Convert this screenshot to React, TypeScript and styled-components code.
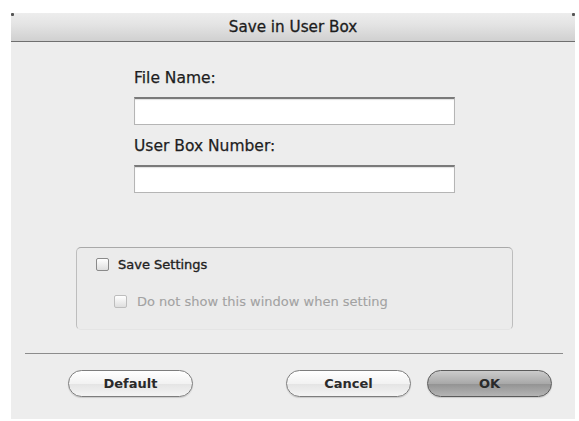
import React from "react";
import styled, { createGlobalStyle } from "styled-components";

const Global = createGlobalStyle`
  html, body { margin: 0; padding: 0; background: #ffffff; }
  body { font-family: "DejaVu Sans", "Liberation Sans", sans-serif; }
`;

const Window = styled.div`
  margin: 13px 0 0 11px;
  width: 564px;
  height: 406px;
  background: #ededed;
  display: flex;
  flex-direction: column;
  position: relative;
`;

const TitleBar = styled.div`
  height: 28px;
  border-bottom: 1px solid #6f6f6f;
  background: linear-gradient(#ededed, #e4e4e4 40%, #d0d0d0);
  display: flex;
  align-items: center;
  justify-content: center;
  font-size: 15.2px;
  color: #1c1c1c;
  -webkit-text-stroke: 0.3px #1c1c1c;
  position: relative;
  &::before, &::after {
    content: "";
    position: absolute;
    top: 0;
    width: 3px;
    height: 3px;
    background: #555;
    border-radius: 1px;
  }
  &::before { left: 0; }
  &::after { right: 0; }
`;

const Form = styled.div`
  padding: 27px 0 0 123px;
  width: 321px;
  display: flex;
  flex-direction: column;
`;

const Label = styled.div<{ $top: number }>`
  margin-top: ${(p) => p.$top}px;
  font-size: 15.5px;
  line-height: 18px;
  color: #1e1e1e;
  -webkit-text-stroke: 0.25px #1e1e1e;
`;

const Field = styled.div`
  margin-top: 10px;
  height: 28px;
  box-sizing: border-box;
  background: #ffffff;
  border: 1px solid #b5b5b5;
  border-top: 2px solid #7a7a7a;
  box-shadow: inset 0 1px 1px rgba(0, 0, 0, 0.12);
`;

const Group = styled.div`
  margin: 54px 0 0 65px;
  width: 437px;
  height: 83px;
  box-sizing: border-box;
  border: 1px solid #bdbdbd;
  border-top-color: #a9a9a9;
  border-bottom-color: #e4e4e4;
  border-radius: 5px;
  background: #ebebeb;
  padding: 9px 0 0 19px;
  display: flex;
  flex-direction: column;
`;

const CheckRow = styled.div<{ $indent: number; $top: number }>`
  display: flex;
  align-items: center;
  gap: ${(p) => (p.$indent ? 10 : 9)}px;
  margin: ${(p) => p.$top}px 0 0 ${(p) => p.$indent}px;
  font-size: 13px;
  line-height: 15px;
`;

const Box = styled.span<{ $disabled?: boolean }>`
  width: 13px;
  height: 13px;
  box-sizing: border-box;
  border: 1px solid ${(p) => (p.$disabled ? "#bdbdbd" : "#8a8a8a")};
  border-radius: 2px;
  background: linear-gradient(#ffffff, #dedede);
  flex: none;
`;

const CheckText = styled.span<{ $disabled?: boolean }>`
  color: ${(p) => (p.$disabled ? "#a2a2a2" : "#222222")};
  -webkit-text-stroke: ${(p) => (p.$disabled ? "0.1px #a2a2a2" : "0.35px #222222")};
`;

const Separator = styled.div`
  margin: 23px 12px 0 14px;
  height: 1px;
  background: #8c8c8c;
`;

const ButtonRow = styled.div`
  margin-top: 16px;
  padding: 0 23px 0 57px;
  display: flex;
  align-items: center;
`;

const Spacer = styled.div`
  flex: 1;
`;

const Button = styled.div<{ $primary?: boolean }>`
  width: 125px;
  height: 27px;
  box-sizing: border-box;
  border-radius: 14px;
  border: 1px solid ${(p) => (p.$primary ? "#5a5a5a" : "#7d7d7d")};
  background: ${(p) =>
    p.$primary
      ? "linear-gradient(#cbcbcb, #a9a9a9 50%, #939393 52%, #b4b4b4)"
      : "linear-gradient(#ffffff, #f2f2f2 50%, #e4e4e4 52%, #f4f4f4)"};
  box-shadow: 0 1px 1px rgba(0, 0, 0, 0.15);
  display: flex;
  align-items: center;
  justify-content: center;
  font-size: 13px;
  font-weight: bold;
  color: #2a2a2a;
  & + & { margin-left: 16px; }
`;

export default function App() {
  return (
    <>
      <Global />
      <Window>
        <TitleBar>Save in User Box</TitleBar>
        <Form>
          <Label $top={0}>File Name:</Label>
          <Field />
          <Label $top={12}>User Box Number:</Label>
          <Field />
        </Form>
        <Group>
          <CheckRow $indent={0} $top={0}>
            <Box />
            <CheckText>Save Settings</CheckText>
          </CheckRow>
          <CheckRow $indent={18} $top={22}>
            <Box $disabled />
            <CheckText $disabled>Do not show this window when setting</CheckText>
          </CheckRow>
        </Group>
        <Separator />
        <ButtonRow>
          <Button>Default</Button>
          <Spacer />
          <Button>Cancel</Button>
          <Button $primary>OK</Button>
        </ButtonRow>
      </Window>
    </>
  );
}
